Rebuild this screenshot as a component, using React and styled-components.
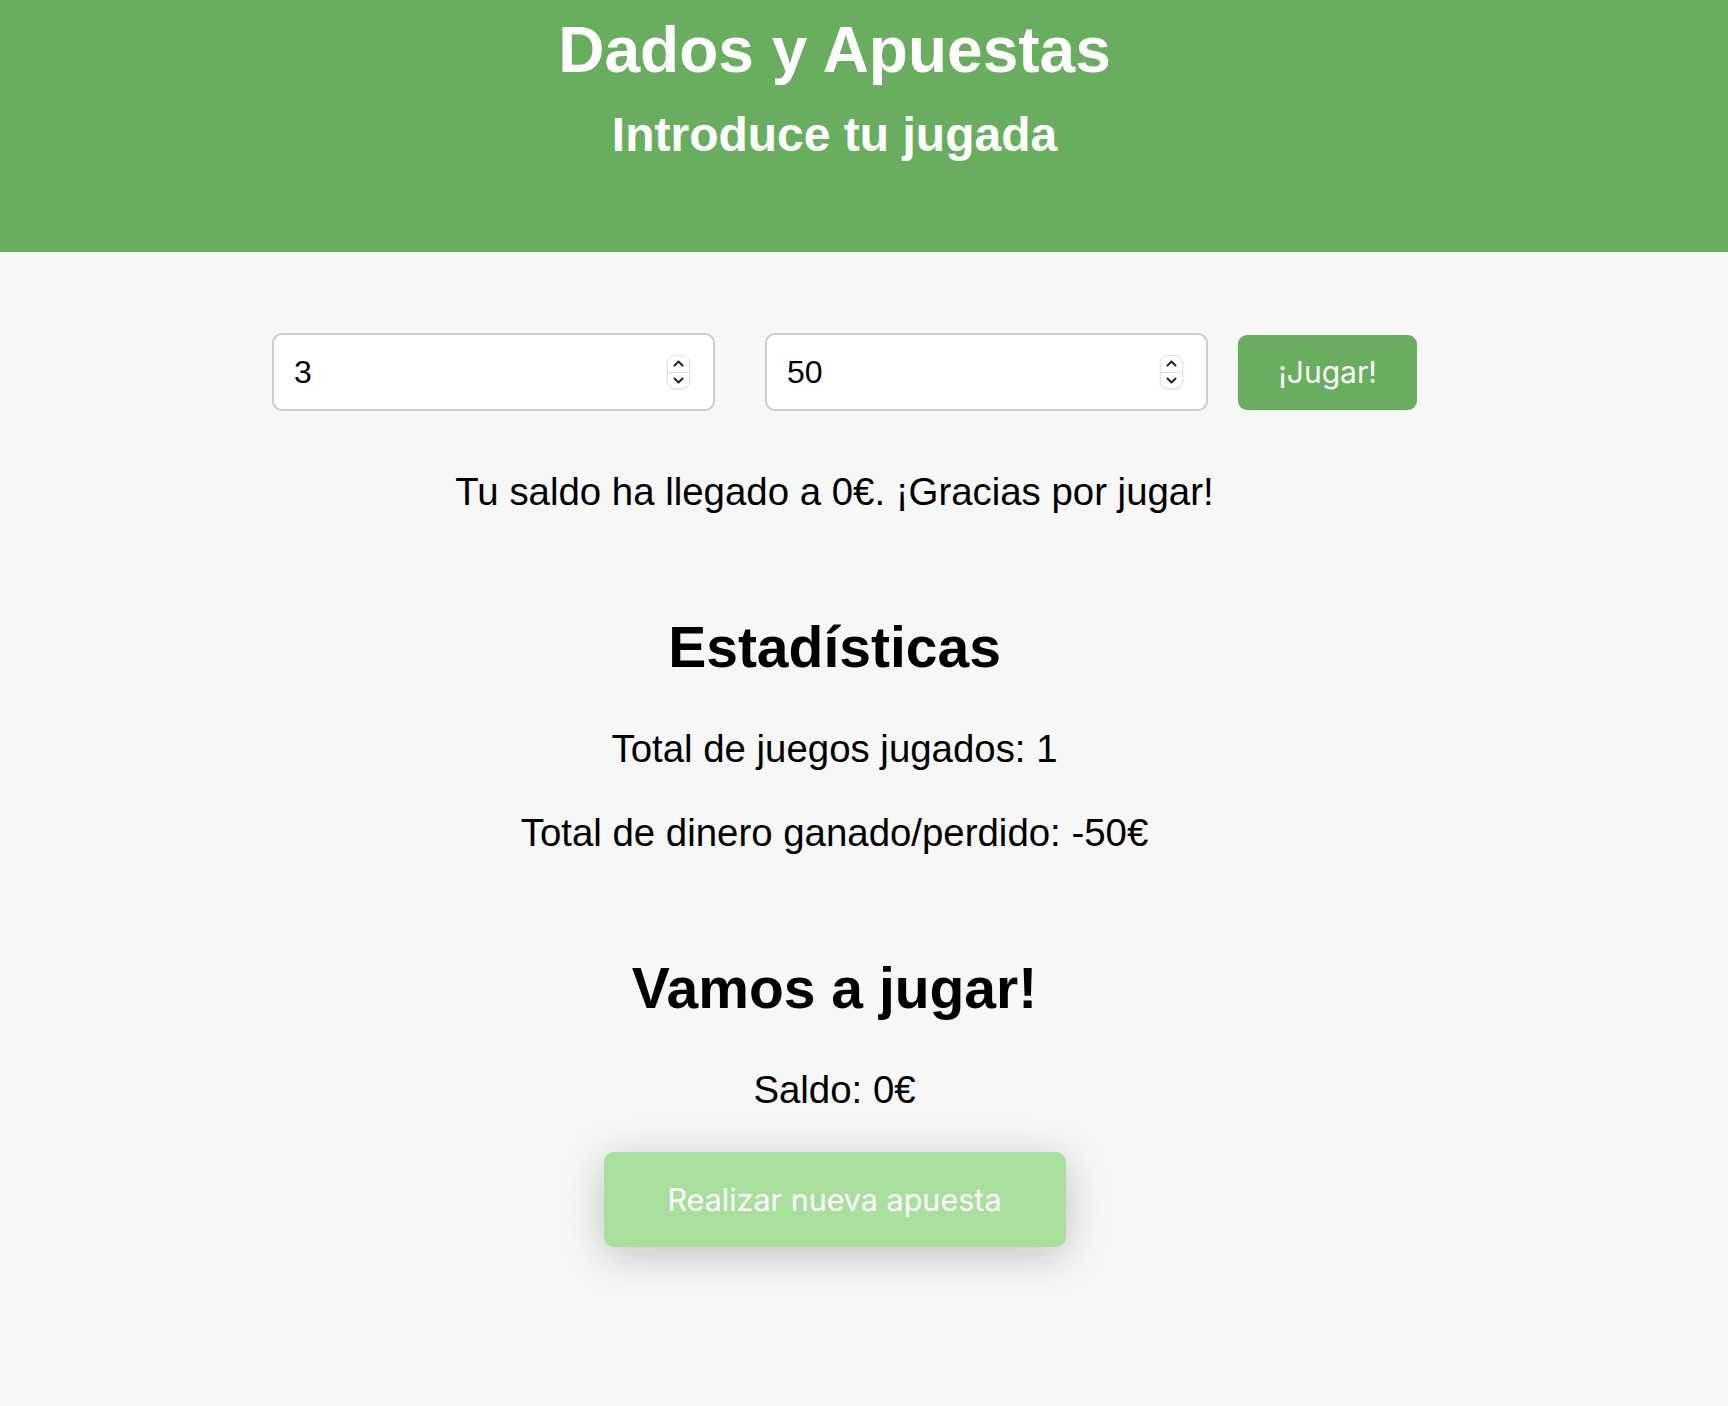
import React from 'react'
import styled, { createGlobalStyle } from 'styled-components'

const GlobalStyle = createGlobalStyle`
  html, body {
    margin: 0;
    padding: 0;
    background: #f7f7f7;
  }
  body {
    font-family: "Liberation Sans", Arial, Helvetica, sans-serif;
    color: #000;
  }
  #root {
    min-height: 100vh;
  }
`

const App = () => {
  return (
    <Page>
      <GlobalStyle />
      <Header>
        <Title>Dados y Apuestas</Title>
        <Subtitle>Introduce tu jugada</Subtitle>
      </Header>

      <Main>
        <BetRow>
          <NumberField value='3' $spacing={50} />
          <NumberField value='50' $spacing={30} />
          <PlayButton>¡Jugar!</PlayButton>
        </BetRow>

        <Message>Tu saldo ha llegado a 0€. ¡Gracias por jugar!</Message>

        <Section>
          <SectionTitle>Estadísticas</SectionTitle>
          <Line>Total de juegos jugados: 1</Line>
          <Line>Total de dinero ganado/perdido: -50€</Line>
        </Section>

        <Section>
          <SectionTitle>Vamos a jugar!</SectionTitle>
          <Line>Saldo: 0€</Line>
          <NewBetButton disabled>Realizar nueva apuesta</NewBetButton>
        </Section>
      </Main>
    </Page>
  )
}

export default App

const NumberField = ({ value, $spacing }) => (
  <Field $spacing={$spacing}>
    <FieldInput type='text' defaultValue={value} />
    <Stepper>
      <StepHalf>
        <svg width='11' height='7' viewBox='0 0 11 7'>
          <polyline points='1.5,5.5 5.5,1.5 9.5,5.5' fill='none' stroke='#222' strokeWidth='2' strokeLinecap='round' strokeLinejoin='round' />
        </svg>
      </StepHalf>
      <StepHalf $bottom>
        <svg width='11' height='7' viewBox='0 0 11 7'>
          <polyline points='1.5,1.5 5.5,5.5 9.5,1.5' fill='none' stroke='#222' strokeWidth='2' strokeLinecap='round' strokeLinejoin='round' />
        </svg>
      </StepHalf>
    </Stepper>
  </Field>
)

const Page = styled.div`
  display: flex;
  flex-direction: column;
  min-height: 100vh;
`

const Header = styled.header`
  background: #69ae5e;
  color: #fff;
  height: 252px;
  box-sizing: border-box;
  padding: 14px 59px 0 0;
  display: flex;
  flex-direction: column;
  align-items: center;
`

const Title = styled.h1`
  margin: 0;
  font-size: 64px;
  line-height: 72px;
  font-weight: 700;
`

const Subtitle = styled.h2`
  margin: 21px 0 0;
  font-size: 48px;
  line-height: 56px;
  font-weight: 700;
`

const Main = styled.main`
  padding: 81px 59px 80px 0;
  display: flex;
  flex-direction: column;
  align-items: center;
`

const BetRow = styled.div`
  display: flex;
  align-items: center;
  margin-left: 20px;
`

const Field = styled.label`
  display: flex;
  align-items: center;
  width: 443px;
  height: 78px;
  box-sizing: border-box;
  padding: 0 23px 0 20px;
  margin-right: ${p => p.$spacing}px;
  background: #fff;
  border: 2px solid #cccccc;
  border-radius: 10px;
`

const FieldInput = styled.input`
  flex: 1;
  min-width: 0;
  border: none;
  outline: none;
  padding: 0;
  background: transparent;
  font-family: "Liberation Sans", Arial, sans-serif;
  font-size: 32px;
  color: #000;
`

const Stepper = styled.span`
  display: flex;
  flex-direction: column;
  width: 23px;
  height: 34px;
  box-sizing: border-box;
  border: 1px solid #e2e2e2;
  border-radius: 8px;
  background: #fff;
  box-shadow: 0 1px 2px rgba(0, 0, 0, 0.08);
  overflow: hidden;
`

const StepHalf = styled.span`
  flex: 1;
  display: flex;
  align-items: center;
  justify-content: center;
  border-top: ${p => (p.$bottom ? '1px solid #dcdcdc' : 'none')};
`

const PlayButton = styled.button`
  width: 179px;
  height: 75px;
  border: none;
  border-radius: 9px;
  background: #69ae5e;
  color: #fff;
  font-family: Inter, "Noto Sans", sans-serif;
  font-size: 30px;
  cursor: pointer;
`

const Message = styled.p`
  margin: 59px 0 0;
  font-size: 38.4px;
  line-height: 44px;
`

const Section = styled.section`
  display: flex;
  flex-direction: column;
  align-items: center;
  gap: 40px;
  margin-top: 101px;
`

const SectionTitle = styled.h2`
  margin: 0 0 8px;
  font-size: 57px;
  line-height: 64px;
  font-weight: 700;
`

const Line = styled.p`
  margin: 0;
  font-size: 38.4px;
  line-height: 44px;
`

const NewBetButton = styled.button`
  width: 462px;
  height: 95px;
  border: none;
  border-radius: 10px;
  background: #a9df9c;
  color: #fff;
  font-family: Inter, "Noto Sans", sans-serif;
  font-size: 30.5px;
  box-shadow: 0 8px 40px rgba(0, 0, 0, 0.22);
`
